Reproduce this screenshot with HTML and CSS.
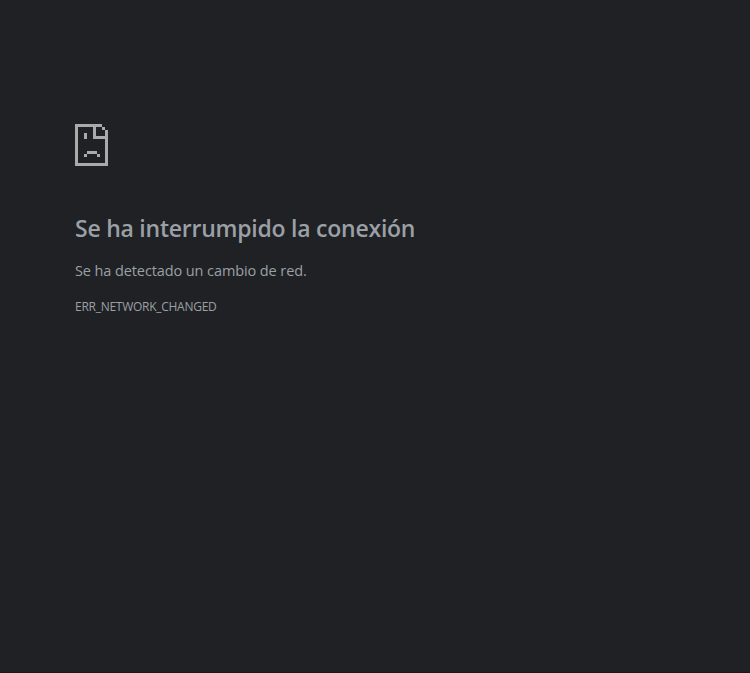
FILE: index.html
```
<!DOCTYPE html>
<html lang="es">
<head>
<meta charset="utf-8">
<title>Se ha interrumpido la conexión</title>
<link rel="stylesheet" href="styles.css">
</head>
<body>
<main class="error">
<svg class="icon" viewBox="0 0 33 42" aria-hidden="true" shape-rendering="crispEdges"><path fill="currentColor" d="M0 0h27v3H21v9h9V6h3v36H0zM3 3v36h27V15H18V3zM27 3h3v3h-3zM9 9h3v6H9zM12 27h10v3H12zM9 30h3v3H9zM22 30h3v3h-3z" fill-rule="evenodd"/></svg>
<h1 class="title">Se ha interrumpido la conexión</h1>
<p class="message">Se ha detectado un cambio de red.</p>
<p class="code">ERR_NETWORK_CHANGED</p>
</main>
</body>
</html>
```
FILE: styles.css
```
body {
  margin: 0;
  box-sizing: border-box;
  height: 100vh;
  background: #202124;
  border-bottom: 1px solid #17181a;
  color: #9aa0a6;
  font-family: "Open Sans", sans-serif;
}
.error { padding: 124px 75px 0; }
.icon { display: block; width: 33px; height: 42px; color: #aaa; }
.title {
  margin: 46px 0 0;
  font-size: 23px;
  font-weight: 600;
  line-height: 32px;
  letter-spacing: -0.24px;
  white-space: nowrap;
}
.message { margin: 16px 0 0; font-size: 14.5px; line-height: 22px; letter-spacing: -0.1px; }
.code { margin: 16px 0 0; font-size: 12px; line-height: 18px; letter-spacing: -0.27px; }
```
